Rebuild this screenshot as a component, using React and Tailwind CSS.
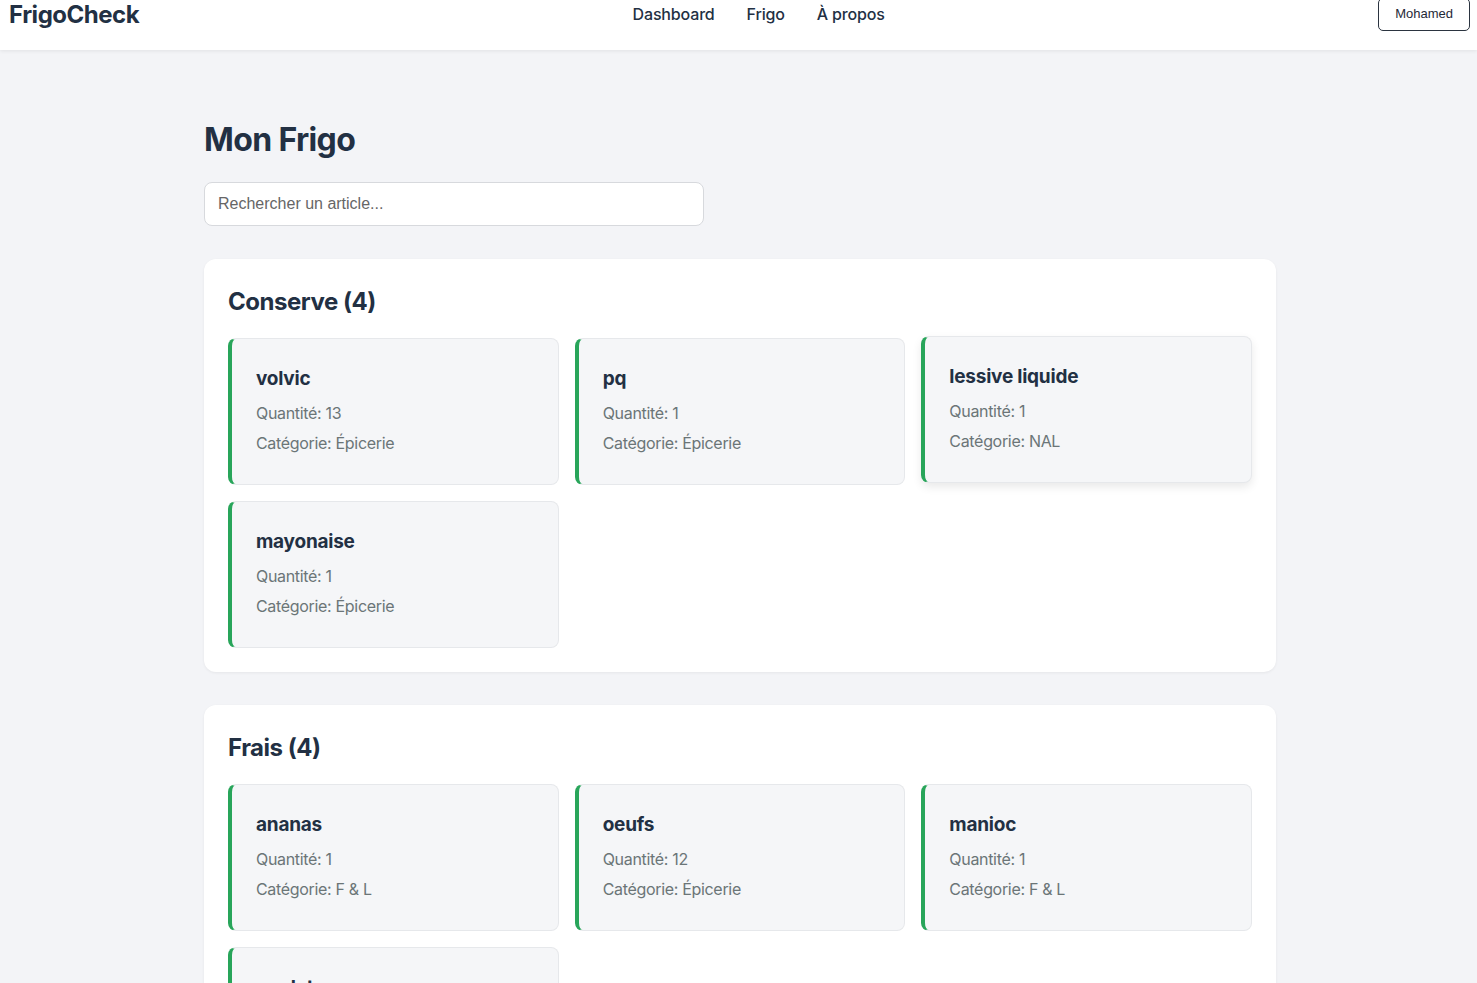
import React from 'react';

const sections = [
  {
    name: 'Conserve',
    items: [
      { name: 'volvic', qty: 13, cat: 'Épicerie' },
      { name: 'pq', qty: 1, cat: 'Épicerie' },
      { name: 'lessive liquide', qty: 1, cat: 'NAL', hover: true },
      { name: 'mayonaise', qty: 1, cat: 'Épicerie' },
    ],
  },
  {
    name: 'Frais',
    items: [
      { name: 'ananas', qty: 1, cat: 'F & L' },
      { name: 'oeufs', qty: 12, cat: 'Épicerie' },
      { name: 'manioc', qty: 1, cat: 'F & L' },
      { name: 'poulet', qty: 1, cat: 'Frais' },
    ],
  },
];

function ItemCard({ item }) {
  return (
    <div
      className={
        'bg-[#f5f6f8] border border-[#e6e8eb] border-l-4 border-l-[#28a55a] rounded-lg pl-6 pr-6 pt-[26px] pb-[29px] ' +
        (item.hover ? '-translate-y-0.5 shadow-[0_4px_10px_rgba(0,0,0,0.09)]' : '')
      }
    >
      <h3 className="text-[19px] leading-[28px] font-bold tracking-[-0.012em] text-[#223043]">{item.name}</h3>
      <p className="mt-[8px] text-[16px] leading-[24px] tracking-[-0.02em] text-[#6b7577]">Quantité: {item.qty}</p>
      <p className="mt-[6px] text-[16px] leading-[24px] tracking-[-0.02em] text-[#6b7577]">Catégorie: {item.cat}</p>
    </div>
  );
}

export default function App() {
  return (
    <div className="min-h-screen bg-[#f3f4f7] font-['Inter',sans-serif] text-[#223043]">
      {/* Header */}
      <header className="h-[50px] bg-white shadow-[0_1px_4px_rgba(0,0,0,0.08)] pl-2 pr-[7px]">
        <div className="h-[30px] flex items-center justify-between">
          <span className="text-[24px] font-bold tracking-[-0.02em] text-[#223043] leading-none pl-px">FrigoCheck</span>
          <nav className="flex items-center gap-8 text-[16px] font-medium tracking-[-0.01em] text-[#223043] -mt-[2px]">
            <a>Dashboard</a>
            <a>Frigo</a>
            <a>À propos</a>
          </nav>
          <button className="h-[33px] -mt-[2px] px-4 bg-white border border-[#2b3440] rounded-[5px] text-[13px] text-[#1f2937] font-['Liberation_Sans',Arial,sans-serif]">
            Mohamed
          </button>
        </div>
      </header>

      {/* Main */}
      <main className="max-w-[1075px] mx-auto pl-[3px] pt-[70px] pb-10">
        <h1 className="text-[32px] leading-[40px] font-bold tracking-[-0.02em] text-[#223043]">Mon Frigo</h1>
        <input
          type="text"
          placeholder="Rechercher un article..."
          className="mt-[22px] w-[500px] h-[44px] px-[13px] bg-white border border-[#d7d9dd] rounded-lg text-[16px] font-['Liberation_Sans',Arial,sans-serif] placeholder:text-[#666] outline-none"
        />

        <div className="mt-[33px] flex flex-col gap-[33px]">
          {sections.map((s) => (
            <section key={s.name} className="bg-white rounded-xl shadow-[0_1px_3px_rgba(0,0,0,0.06)] px-6 pt-[27px] pb-6">
              <h2 className="text-[24px] leading-[32px] font-bold tracking-[-0.02em] text-[#223043]">
                {s.name} ({s.items.length})
              </h2>
              <div className="mt-5 grid grid-cols-3 gap-4">
                {s.items.map((it) => (
                  <ItemCard key={it.name} item={it} />
                ))}
              </div>
            </section>
          ))}
        </div>
      </main>
    </div>
  );
}
